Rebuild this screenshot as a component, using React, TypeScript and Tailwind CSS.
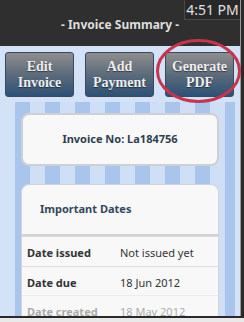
import React from "react";

const sans = { fontFamily: '"Noto Sans", "Open Sans", sans-serif' };
const serif = { fontFamily: '"Liberation Serif", "DejaVu Serif", serif' };

function ActionButton({ l1, l2 }: { l1: string; l2: string }) {
  return (
    <div
      className="w-[69px] h-[45px] rounded-[3px] border border-[#3a4a5c] bg-[linear-gradient(180deg,#8e8e8e_0%,#5d6b7b_50%,#2c5176_100%)] flex flex-col items-center justify-center text-[14px] leading-[16px] font-bold text-[#eeeeee] [text-shadow:0_1px_1px_rgba(0,0,0,0.5)]"
      style={serif}
    >
      <span>{l1}</span>
      <span>{l2}</span>
    </div>
  );
}

function Row({ label, value, faded, h }: { label: string; value: string; faded?: boolean; h: string }) {
  return (
    <div
      className={`${h} shrink-0 flex items-center pt-[4px] text-[11px] text-[#333] border-t border-[#dcdcdc] ${faded ? "opacity-40" : ""}`}
    >
      <span className="w-[98px] pl-[5px] font-bold">{label}</span>
      <span>{value}</span>
    </div>
  );
}

export default function App() {
  return (
    <div className="w-[244px] h-[322px] relative overflow-hidden bg-[#e9e9e9]" style={sans}>
      <div className="flex h-[316px]">
        <div className="w-[240px] h-[316px] flex flex-col">
          <div className="h-[46px] shrink-0 bg-[#2f2f2f] flex items-center justify-center pt-[4px] relative">
            <span className="text-[12px] font-bold text-[#dedede]">- Invoice Summary -</span>
            <div className="absolute right-0 top-0 h-[20px] w-[56px] bg-[#282828] border-b border-l border-[#4a4a4a] flex items-center justify-center text-[14px] text-[#e0e0e0]">
              4:51 PM
            </div>
          </div>
          <div className="flex-1 min-h-0 bg-[#d3e2f6] flex flex-col overflow-hidden">
            <div className="flex shrink-0 gap-[11px] pl-[5px] pt-[6px] h-[56px]">
              <ActionButton l1="Edit" l2="Invoice" />
              <ActionButton l1="Add" l2="Payment" />
              <ActionButton l1="Generate" l2="PDF" />
            </div>
            <div className="ml-[15px] w-[220px] flex-1 min-h-0 overflow-hidden bg-[repeating-linear-gradient(90deg,#aac5ec_0px,#aac5ec_15px,#cfdff6_15px,#cfdff6_30px)] pt-[11px] flex flex-col">
              <div className="ml-[6px] shrink-0 w-[198px] h-[53px] rounded-[8px] bg-[#f8f8f8] border-2 border-[#cdd0d4] flex items-center justify-center">
                <span className="text-[11px] font-bold text-[#2e3f52]">Invoice No: La184756</span>
              </div>
              <div className="ml-[6px] mt-[18px] shrink-0 w-[198px] h-[140px] rounded-t-[8px] bg-[#f8f8f8] border-x border-t border-[#d3d5d8] overflow-hidden flex flex-col">
                <div className="h-[51px] shrink-0 flex items-center pl-[18px] border-b-2 border-[#d2d2d2]">
                  <span className="text-[11px] font-bold text-[#33475c]">Important Dates</span>
                </div>
                <Row h="h-[30px]" label="Date issued" value="Not issued yet" />
                <Row h="h-[29px]" label="Date due" value="18 Jun 2012" />
                <Row h="h-[29px]" label="Date created" value="18 May 2012" faded />
              </div>
            </div>
          </div>
        </div>
        <div className="w-[4px] bg-[#2a2a2a] border-l border-[#9a9a9a]" />
      </div>
      <div className="h-[2px] bg-[#2a2a2a]" />
      <svg className="absolute left-0 top-0 pointer-events-none" width="244" height="322">
        <ellipse cx="198.5" cy="71" rx="41" ry="30.5" fill="none" stroke="#c8334d" strokeWidth="3" />
      </svg>
    </div>
  );
}
